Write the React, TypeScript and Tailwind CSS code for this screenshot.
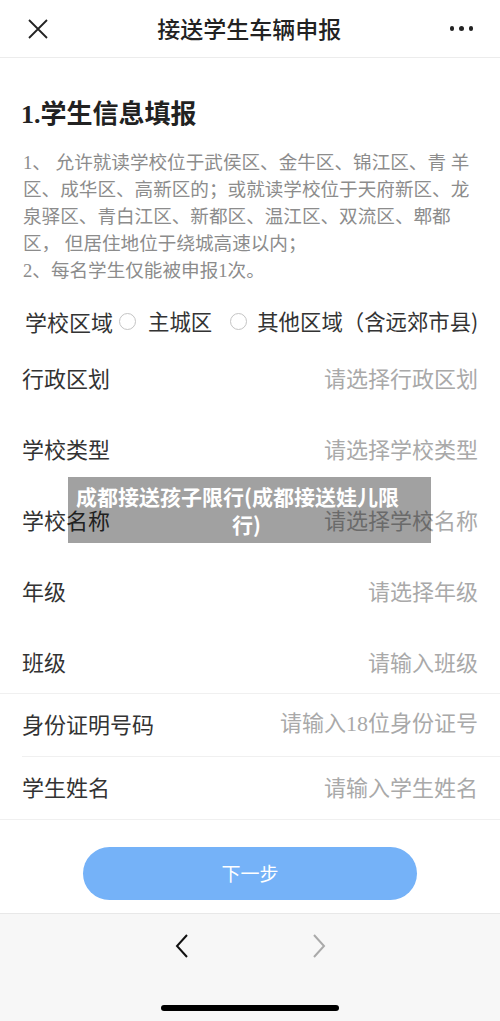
import React from "react";

const cjk = { fontFamily: '"Noto Sans CJK SC", "Noto Sans", sans-serif' };
const serifCjk = { fontFamily: '"Liberation Serif", "Noto Sans CJK SC", serif' };

function Row({ label, placeholder, h }: { label: string; placeholder: string; h: string }) {
  return (
    <div className={`flex items-center justify-between pl-[22px] pr-[22px] ${h}`}>
      <span className="text-[22px] text-[#333]">{label}</span>
      <span className="text-[22px] text-[#a9a9a9]" style={placeholder.includes("18") ? serifCjk : undefined}>{placeholder}</span>
    </div>
  );
}

function Radio() {
  return <span className="inline-block h-[17px] w-[17px] rounded-full border border-[#c4c4c4] bg-white" />;
}

export default function App() {
  return (
    <div className="relative flex h-[1021px] w-[500px] flex-col overflow-hidden bg-white" style={cjk}>
      {/* header */}
      <div className="flex h-[58px] shrink-0 items-center justify-between border-b border-[#ececec] px-[27px]">
        <svg width="22" height="20" viewBox="0 0 22 20">
          <path d="M2 1 L20 19 M20 1 L2 19" stroke="#222" strokeWidth="1.8" fill="none" />
        </svg>
        <span className="text-[23px] font-medium text-[#222]">接送学生车辆申报</span>
        <div className="flex items-center gap-[5px]">
          <span className="h-[4.5px] w-[4.5px] rounded-full bg-[#222]" />
          <span className="h-[4.5px] w-[4.5px] rounded-full bg-[#222]" />
          <span className="h-[4.5px] w-[4.5px] rounded-full bg-[#222]" />
        </div>
      </div>

      {/* heading */}
      <div className="mt-[39px] pl-[21px] text-[26px] font-bold leading-[36px] text-[#222]" style={serifCjk}>
        1.学生信息填报
      </div>

      {/* notice */}
      <div className="mt-[16px] pl-[23px] text-[18.6px] leading-[27px] text-[#8c8c8c]" style={serifCjk}>
        <div>1、 允许就读学校位于武侯区、金牛区、锦江区、青 羊</div>
        <div>区、成华区、高新区的；或就读学校位于天府新区、龙</div>
        <div>泉驿区、青白江区、新都区、温江区、双流区、郫都</div>
        <div>区， 但居住地位于绕城高速以内；</div>
        <div>2、每名学生仅能被申报1次。</div>
      </div>

      {/* radio row */}
      <div className="mt-[20px] flex h-[34px] items-center pl-[25px] text-[22px] text-[#333]">
        <span>学校区域</span>
        <span className="ml-[6px] flex items-center"><Radio /></span>
        <span className="ml-[12px] text-[21.4px]">主城区</span>
        <span className="ml-[18px] flex items-center"><Radio /></span>
        <span className="ml-[10px] text-[21.4px]">其他区域（含远郊市县)</span>
      </div>

      {/* rows */}
      <div>
        <div className="pt-[8px]"><Row label="行政区划" placeholder="请选择行政区划" h="h-[63px]" /></div>
        <div className="pt-[8px]"><Row label="学校类型" placeholder="请选择学校类型" h="h-[63px]" /></div>
        <div className="pt-[8px]"><Row label="学校名称" placeholder="请选择学校名称" h="h-[63px]" /></div>
        <div className="pt-[8px]"><Row label="年级" placeholder="请选择年级" h="h-[63px]" /></div>
        <div className="pt-[8px]"><Row label="班级" placeholder="请输入班级" h="h-[63px]" /></div>
        <div className="border-t border-[#f0f0f0]">
          <div className="pb-[4px]"><Row label="身份证明号码" placeholder="请输入18位身份证号" h="h-[58px]" /></div>
        </div>
        <div className="ml-[22px] border-t border-[#f0f0f0]">
          <div className="-ml-[22px] pb-[4px]">
            <Row label="学生姓名" placeholder="请输入学生姓名" h="h-[58px]" />
          </div>
        </div>
        <div className="border-t border-[#f0f0f0]" />
      </div>

      {/* button */}
      <div className="flex flex-1 items-start justify-center pt-[27px]">
        <div className="flex h-[53px] w-[334px] items-center justify-center rounded-full bg-[#75b2f8] text-[19px] text-white">
          下一步
        </div>
      </div>

      {/* bottom bar */}
      <div className="relative flex h-[108px] shrink-0 flex-col items-center border-t border-[#e8e8e8] bg-[#f7f7f7]">
        <div className="mt-[19px] flex items-center gap-[121px]">
          <svg width="16" height="26" viewBox="0 0 16 26">
            <path d="M13 2 L3 13 L13 24" stroke="#111" strokeWidth="2" fill="none" />
          </svg>
          <svg width="16" height="26" viewBox="0 0 16 26">
            <path d="M3 2 L13 13 L3 24" stroke="#aaa" strokeWidth="2" fill="none" />
          </svg>
        </div>
        <div className="mt-auto mb-[10px] h-[6px] w-[178px] rounded-full bg-black" />
      </div>

      {/* watermark overlay */}
      <div className="absolute left-[68px] top-[477px] flex h-[66px] w-[363px] flex-col items-center justify-center bg-[rgba(0,0,0,0.37)] pl-0 pr-[24px] text-center text-[21px] font-bold leading-[28px] text-white">
        <div>成都接送孩子限行(成都接送娃儿限</div>
        <div className="pl-[18px]">行)</div>
      </div>
    </div>
  );
}
